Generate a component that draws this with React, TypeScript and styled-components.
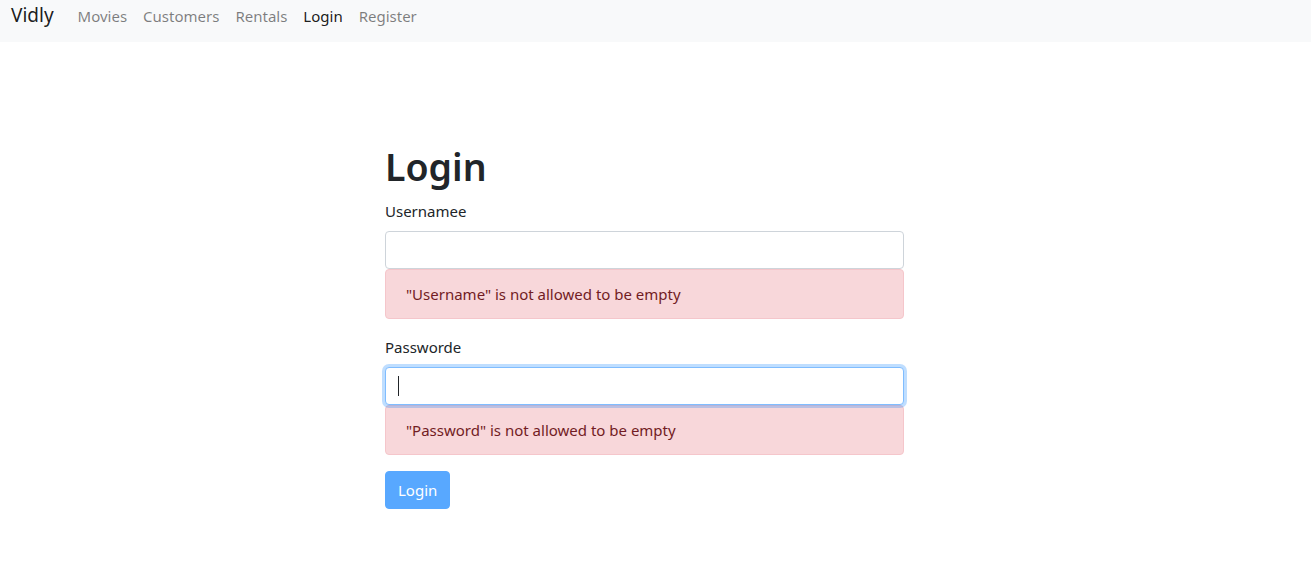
import React from "react";
import styled, { createGlobalStyle, css } from "styled-components";

const Global = createGlobalStyle`
  html, body { margin: 0; padding: 0; background: #fff; }
  body {
    font-family: "Noto Sans", "Open Sans", sans-serif;
    font-size: 15px;
    line-height: 24px;
    color: #212529;
  }
  * { box-sizing: border-box; }
`;

const Navbar = styled.nav`
  display: flex;
  align-items: flex-start;
  height: 42px;
  padding: 0 0 0 11px;
  background: #f8f9fa;
`;

const Brand = styled.a`
  font-size: 19px;
  line-height: 30px;
  margin-right: 16px;
  color: rgba(0, 0, 0, 0.9);
  text-decoration: none;
`;

const NavList = styled.div`
  display: flex;
  margin-top: 4px;
`;

const NavLink = styled.a<{ $active?: boolean }>`
  padding: 0 8px;
  line-height: 24px;
  text-decoration: none;
  color: ${(p) => (p.$active ? "rgba(0,0,0,0.9)" : "rgba(0,0,0,0.5)")};
`;

const Main = styled.main`
  width: 519px;
  margin: 0 0 0 385px;
  padding-top: 101px;
`;

const Title = styled.h1`
  font-size: 37.5px;
  line-height: 48px;
  font-weight: 600;
  margin: 0 0 8px;
`;

const Group = styled.div`
  margin-bottom: 16px;
`;

const Label = styled.label`
  display: block;
  line-height: 24px;
  margin-bottom: 8px;
`;

const Field = styled.div`
  position: relative;
`;

const Input = styled.input<{ $focused?: boolean }>`
  display: block;
  width: 100%;
  height: 38px;
  padding: 6px 12px;
  font: inherit;
  color: #495057;
  background: #fff;
  border: 1px solid #ced4da;
  border-radius: 4px;
  outline: none;
  ${(p) =>
    p.$focused &&
    css`
      border-color: #80bdff;
      box-shadow: 0 0 0 3px rgba(0, 123, 255, 0.25);
    `}
`;

const Caret = styled.span`
  position: absolute;
  left: 13px;
  top: 9px;
  width: 1px;
  height: 20px;
  background: #212529;
`;

const Alert = styled.div`
  padding: 12px 20px;
  line-height: 24px;
  margin-bottom: 16px;
  color: #721c24;
  background: #f8d7da;
  border: 1px solid #f5c6cb;
  border-radius: 4px;
`;

const Button = styled.button`
  display: inline-block;
  height: 38px;
  padding: 6px 12px;
  font: inherit;
  line-height: 24px;
  color: #fff;
  background: #007bff;
  border: 1px solid #007bff;
  border-radius: 4px;
  opacity: 0.65;
`;

export default function App() {
  return (
    <>
      <Global />
      <Navbar>
        <Brand href="#">Vidly</Brand>
        <NavList>
          <NavLink href="#">Movies</NavLink>
          <NavLink href="#">Customers</NavLink>
          <NavLink href="#">Rentals</NavLink>
          <NavLink href="#" $active>
            Login
          </NavLink>
          <NavLink href="#">Register</NavLink>
        </NavList>
      </Navbar>
      <Main>
        <Title>Login</Title>
        <form onSubmit={(e) => e.preventDefault()}>
          <Group>
            <Label htmlFor="username">Usernamee</Label>
            <Input id="username" type="text" />
            <Alert>"Username" is not allowed to be empty</Alert>
          </Group>
          <Group>
            <Label htmlFor="password">Passworde</Label>
            <Field>
              <Input id="password" type="password" $focused />
              <Caret />
            </Field>
            <Alert>"Password" is not allowed to be empty</Alert>
          </Group>
          <Button type="submit" disabled>
            Login
          </Button>
        </form>
      </Main>
    </>
  );
}
